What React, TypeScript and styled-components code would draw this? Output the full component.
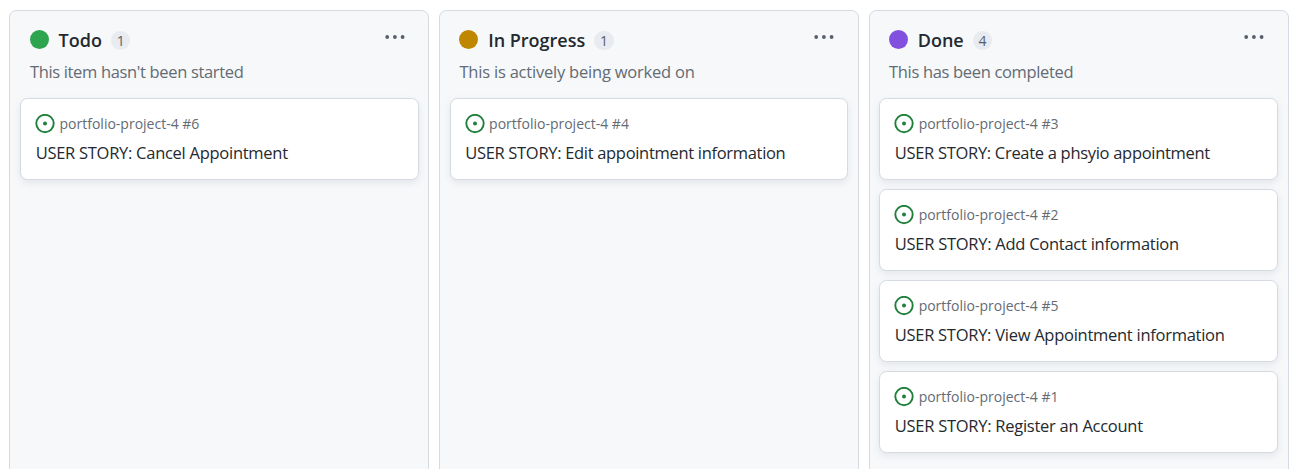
import React from 'react';
import styled, { createGlobalStyle } from 'styled-components';

const GlobalStyle = createGlobalStyle`
  * { box-sizing: border-box; }
  html, body { margin: 0; height: 100%; overflow: hidden; background: #fff; }
  body { font-family: 'Open Sans', 'Noto Sans', sans-serif; color: #24292f; }
`;

const Board = styled.main`
  display: flex;
  gap: 9.55px;
  height: 469px;
  padding: 10px 0 0 9.45px;
  overflow: hidden;
`;

const Column = styled.section`
  flex: 0 0 420px;
  height: 480px;
  padding: 0 9.6px;
  background: #f6f8fa;
  border: 1px solid #d5dae0;
  border-radius: 7.5px;
`;

const Header = styled.header`
  height: 87px;
  padding: 17px 14.2px 0 9.9px;
`;

const HeadingRow = styled.div`
  display: flex;
  align-items: center;
  height: 24px;
`;

const StatusDot = styled.span<{ $color: string }>`
  width: 19px;
  height: 19px;
  margin: 0 9.7px 1px 0;
  border-radius: 50%;
  background: ${(p) => p.$color};
`;

const Heading = styled.h2`
  margin: 0;
  font-size: 18px;
  font-weight: 600;
  line-height: 24px;
  white-space: nowrap;
`;

const Count = styled.span`
  min-width: 18.5px;
  height: 19px;
  margin: 0 auto 0 9.2px;
  padding: 0 5.6px;
  border-radius: 10px;
  background: #e8ebef;
  color: #57606a;
  font-size: 14px;
  font-weight: 500;
  line-height: 19px;
  text-align: center;
`;

const MenuButton = styled.button`
  display: flex;
  align-items: center;
  height: 20px;
  margin: 0 0 6px;
  padding: 0;
  border: 0;
  background: none;
  color: #57606a;
`;

const Description = styled.p<{ $tracking: number }>`
  margin: 8px 0 0;
  color: #636b74;
  font-size: 16.5px;
  line-height: 24px;
  letter-spacing: ${(p) => p.$tracking}px;
  white-space: nowrap;
`;

const CardList = styled.div`
  display: flex;
  flex-direction: column;
  gap: 9px;
`;

const Card = styled.article`
  height: 82px;
  padding: 14px 14px 0;
  background: #fff;
  border: 1px solid #d5dae0;
  border-radius: 7.5px;
  box-shadow: 0 3px 7px rgba(140, 149, 159, 0.17);
`;

const Meta = styled.div`
  display: flex;
  align-items: center;
  gap: 4.5px;
  height: 21px;
  color: #636b74;
  font-size: 14px;
  line-height: 21px;
  white-space: nowrap;
`;

const CardTitle = styled.h3<{ $tracking: number }>`
  margin: 7px 0 0 0.6px;
  font-size: 16.5px;
  font-weight: 400;
  line-height: 24px;
  letter-spacing: ${(p) => p.$tracking}px;
  white-space: nowrap;
`;

const OpenIssueIcon = () => (
  <svg width="20" height="20" viewBox="0 0 20 20" fill="none" aria-hidden="true">
    <circle cx="10" cy="9.5" r="8.7" stroke="#1f7f3b" strokeWidth="1.9" />
    <circle cx="10" cy="9.5" r="2" fill="#1f7f3b" />
  </svg>
);

const KebabIcon = () => (
  <svg width="20" height="20" viewBox="0 0 20 20" fill="currentColor" aria-hidden="true">
    <circle cx="2.2" cy="10" r="1.9" />
    <circle cx="9.9" cy="10" r="1.9" />
    <circle cx="17.6" cy="10" r="1.9" />
  </svg>
);

type Story = { issue: number; title: string; tracking: number };
type Status = {
  name: string;
  color: string;
  description: string;
  tracking: number;
  stories: Story[];
};

const columns: Status[] = [
  {
    name: 'Todo',
    color: '#2da44e',
    description: "This item hasn't been started",
    tracking: -0.34,
    stories: [{ issue: 6, title: 'Cancel Appointment', tracking: -0.27 }],
  },
  {
    name: 'In Progress',
    color: '#bf8700',
    description: 'This is actively being worked on',
    tracking: -0.21,
    stories: [{ issue: 4, title: 'Edit appointment information', tracking: -0.31 }],
  },
  {
    name: 'Done',
    color: '#8250df',
    description: 'This has been completed',
    tracking: -0.33,
    stories: [
      { issue: 3, title: 'Create a phsyio appointment', tracking: -0.3 },
      { issue: 2, title: 'Add Contact information', tracking: -0.26 },
      { issue: 5, title: 'View Appointment information', tracking: -0.27 },
      { issue: 1, title: 'Register an Account', tracking: -0.26 },
    ],
  },
];

export default function App() {
  return (
    <>
      <GlobalStyle />
      <Board>
        {columns.map((column) => (
          <Column key={column.name}>
            <Header>
              <HeadingRow>
                <StatusDot $color={column.color} />
                <Heading>{column.name}</Heading>
                <Count>{column.stories.length}</Count>
                <MenuButton aria-label="Column options">
                  <KebabIcon />
                </MenuButton>
              </HeadingRow>
              <Description $tracking={column.tracking}>{column.description}</Description>
            </Header>
            <CardList>
              {column.stories.map((story) => (
                <Card key={story.issue}>
                  <Meta>
                    <OpenIssueIcon />
                    <span>portfolio-project-4 #{story.issue}</span>
                  </Meta>
                  <CardTitle $tracking={story.tracking}>USER STORY: {story.title}</CardTitle>
                </Card>
              ))}
            </CardList>
          </Column>
        ))}
      </Board>
    </>
  );
}
